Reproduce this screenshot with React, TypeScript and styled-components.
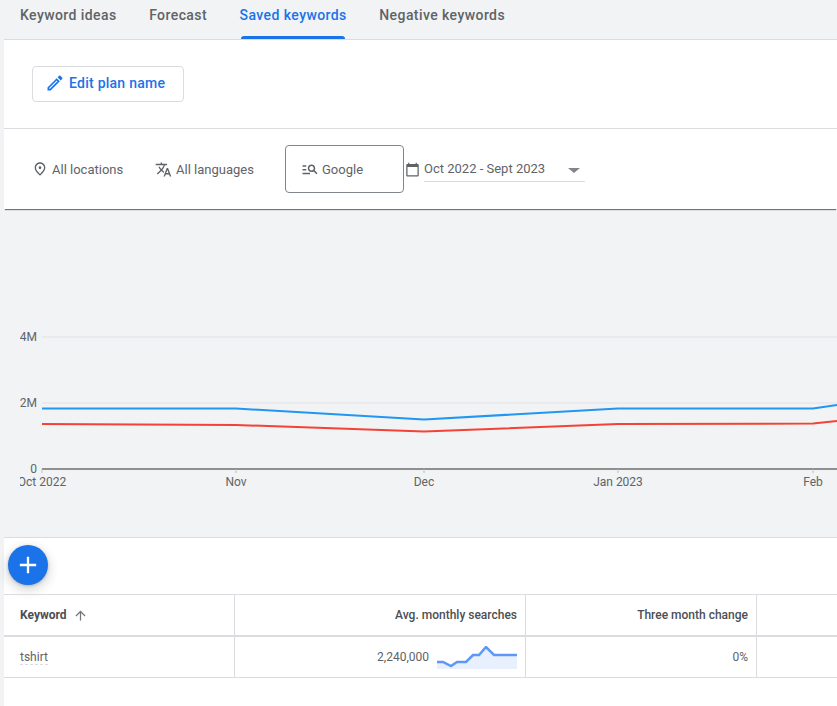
import React from 'react';
import styled, { createGlobalStyle } from 'styled-components';
import {
  MdAdd,
  MdArrowUpward,
  MdOutlineEdit,
  MdManageSearch,
  MdOutlinePlace,
  MdTranslate,
  MdCalendarToday,
} from 'react-icons/md';

const GlobalStyle = createGlobalStyle`
  html, body {
    margin: 0;
    padding: 0;
    background: #f1f3f4;
    font-family: Roboto, "Liberation Sans", sans-serif;
    color: #3c4043;
  }
`;

const Page = styled.div`
  width: 837px;
  height: 706px;
  overflow: hidden;
`;

const TabBar = styled.nav`
  display: flex;
  gap: 32.5px;
  height: 39px;
  padding-left: 20px;
`;

const Tab = styled.div<{ $active?: boolean }>`
  position: relative;
  font-size: 14px;
  font-weight: 500;
  letter-spacing: 0.42px;
  line-height: 30px;
  color: ${(p) => (p.$active ? '#1a73e8' : '#5f6368')};
  &::after {
    content: '';
    display: ${(p) => (p.$active ? 'block' : 'none')};
    position: absolute;
    left: 1px;
    right: 2px;
    bottom: 0;
    height: 3px;
    border-radius: 3px 3px 0 0;
    background: #1a73e8;
  }
`;

const Content = styled.div`
  margin-left: 4px;
`;

const PlanPanel = styled.section`
  height: 89px;
  padding: 26px 28px 0;
  box-sizing: border-box;
  background: #fff;
  border-top: 1px solid #dadce0;
`;

const EditButton = styled.button`
  display: flex;
  align-items: center;
  gap: 4px;
  width: 152px;
  height: 36px;
  padding: 0 12px 2px;
  box-sizing: border-box;
  background: #fff;
  border: 1px solid #dadce0;
  border-radius: 4px;
  color: #1a73e8;
  font-family: inherit;
  font-size: 14px;
  font-weight: 500;
  letter-spacing: 0.25px;
  svg {
    flex: none;
  }
`;

const FilterBar = styled.section`
  position: relative;
  display: flex;
  align-items: center;
  height: 81px;
  padding-left: 28px;
  box-sizing: border-box;
  background: #fff;
  border-top: 1px solid #dadce0;
  box-shadow: 0 2px 1px -1px rgba(60, 64, 67, 0.7);
`;

const FilterItem = styled.div<{ $width: number }>`
  display: flex;
  align-items: center;
  gap: 4px;
  width: ${(p) => p.$width}px;
  font-size: 13px;
  color: #5f6368;
  svg {
    flex: none;
  }
`;

const NetworkBox = styled.div`
  display: flex;
  align-items: center;
  gap: 3px;
  width: 119px;
  height: 48px;
  padding-left: 15px;
  box-sizing: border-box;
  border: 1px solid #80868b;
  border-radius: 4px;
  font-size: 13px;
  color: #5f6368;
`;

const DateWrap = styled.div`
  display: flex;
  align-items: center;
  gap: 4px;
  margin-left: 1px;
  color: #5f6368;
`;

const DateField = styled.div`
  position: relative;
  width: 161px;
  height: 26px;
  margin-top: -1px;
  font-size: 13px;
  line-height: 28px;
  color: #5f6368;
  border-bottom: 1px solid #dadce0;
`;

const Caret = styled.span`
  position: absolute;
  right: 5px;
  top: 13px;
  border-left: 6px solid transparent;
  border-right: 6px solid transparent;
  border-top: 5px solid #80868b;
`;

const ChartArea = styled.section`
  height: 329px;
  padding-left: 16px;
  border-bottom: 1px solid #dadce0;
  box-sizing: border-box;
  svg {
    display: block;
  }
  text {
    font-family: Roboto, "Liberation Sans", sans-serif;
    font-size: 12px;
    fill: #5f6368;
  }
`;

const TableArea = styled.section`
  background: #fff;
  height: 168px;
`;

const ActionRow = styled.div`
  height: 56px;
  padding: 7px 4px 0;
  box-sizing: border-box;
`;

const Fab = styled.button`
  display: flex;
  align-items: center;
  justify-content: center;
  width: 40px;
  height: 40px;
  padding: 0;
  border: 0;
  border-radius: 50%;
  background: #1a73e8;
  color: #fff;
  box-shadow: 0 1px 3px rgba(60, 64, 67, 0.3), 0 4px 8px 3px rgba(60, 64, 67, 0.15);
`;

const Row = styled.div<{ $head?: boolean }>`
  display: grid;
  grid-template-columns: 231px 291px 231px 1fr;
  height: ${(p) => (p.$head ? 43 : 41)}px;
  box-sizing: border-box;
  border-top: ${(p) => (p.$head ? '1px solid #dadce0' : 'none')};
  border-bottom: ${(p) => (p.$head ? '2px solid #dadce0' : '1px solid #dadce0')};
`;

const Cell = styled.div<{ $right?: boolean; $head?: boolean; $strong?: boolean }>`
  display: flex;
  align-items: center;
  justify-content: ${(p) => (p.$right ? 'flex-end' : 'flex-start')};
  padding: 0 8px 0 ${(p) => (p.$right ? 8 : 16)}px;
  border-right: 1px solid #dadce0;
  box-sizing: border-box;
  font-size: 12px;
  font-weight: ${(p) => (p.$strong ? 700 : p.$head ? 500 : 400)};
  color: ${(p) => (p.$head ? '#4b4f53' : '#5f6368')};
  &:last-child {
    border-right: 0;
  }
`;

const SortIcon = styled.span`
  display: flex;
  margin-left: 6px;
  color: #757575;
`;

const KeywordText = styled.span`
  border-bottom: 1px dashed #dadce0;
  line-height: 14px;
`;

const Searches = styled.span`
  margin-right: 8px;
`;

const SparkSvg = styled.svg`
  margin-top: 2px;
`;

const blue = 'M42 408.5 L236 408.5 L424 419.5 L618 408.5 L813 408.5 L837 405';
const red = 'M42 424 L236 425 L424 431.5 L618 424 L813 423.5 L837 421';

const xLabels = [
  { x: 42, label: 'Oct 2022' },
  { x: 236, label: 'Nov' },
  { x: 424, label: 'Dec' },
  { x: 618, label: 'Jan 2023' },
  { x: 813, label: 'Feb' },
];

const yLabels = [
  { y: 337, label: '4M' },
  { y: 403, label: '2M' },
];

function TrendChart() {
  return (
    <svg width={817} height={328} viewBox="20 209 817 328">
      {yLabels.map((t) => (
        <g key={t.label}>
          <line x1={42} x2={837} y1={t.y} y2={t.y} stroke="#e8eaed" strokeWidth={2} />
          <text x={37} y={t.y + 4} textAnchor="end">{t.label}</text>
        </g>
      ))}
      <text x={37} y={473} textAnchor="end">0</text>
      <path d={blue} fill="none" stroke="#2196f3" strokeWidth={2} />
      <path d={red} fill="none" stroke="#f44336" strokeWidth={2} />
      <line x1={42} x2={837} y1={469} y2={469} stroke="#8f8f8f" strokeWidth={2} />
      {xLabels.map((t) => (
        <g key={t.label}>
          <line x1={t.x} x2={t.x} y1={469} y2={473} stroke="#bdbdbd" strokeWidth={1} />
          <text x={t.x} y={486} textAnchor="middle">{t.label}</text>
        </g>
      ))}
    </svg>
  );
}

function Sparkline() {
  const line = 'M0 16 L6 16 L14 20 L20 16 L29 16 L36 9 L42 9 L49 1 L57 9 L80 9';
  return (
    <SparkSvg width={80} height={24} viewBox="0 0 80 24">
      <path d={`${line} L80 23 L0 23 Z`} fill="#e8f0fe" />
      <path d={line} fill="none" stroke="#5e97f6" strokeWidth={2.5} />
    </SparkSvg>
  );
}

export default function App() {
  return (
    <Page>
      <GlobalStyle />
      <TabBar>
        <Tab>Keyword ideas</Tab>
        <Tab>Forecast</Tab>
        <Tab $active>Saved keywords</Tab>
        <Tab>Negative keywords</Tab>
      </TabBar>
      <Content>
        <PlanPanel>
          <EditButton>
            <MdOutlineEdit size={20} />
            Edit plan name
          </EditButton>
        </PlanPanel>
        <FilterBar>
          <FilterItem $width={123}>
            <MdOutlinePlace size={16} />
            All locations
          </FilterItem>
          <FilterItem $width={130}>
            <MdTranslate size={17} />
            All languages
          </FilterItem>
          <NetworkBox>
            <MdManageSearch size={18} />
            Google
          </NetworkBox>
          <DateWrap>
            <MdCalendarToday size={15} />
            <DateField>
              Oct 2022 - Sept 2023
              <Caret />
            </DateField>
          </DateWrap>
        </FilterBar>
        <ChartArea>
          <TrendChart />
        </ChartArea>
        <TableArea>
          <ActionRow>
            <Fab aria-label="Add keyword">
              <MdAdd size={28} />
            </Fab>
          </ActionRow>
          <Row $head>
            <Cell $head $strong>
              Keyword
              <SortIcon><MdArrowUpward size={15} /></SortIcon>
            </Cell>
            <Cell $head $right>Avg. monthly searches</Cell>
            <Cell $head $right>Three month change</Cell>
            <Cell $head />
          </Row>
          <Row>
            <Cell><KeywordText>tshirt</KeywordText></Cell>
            <Cell $right>
              <Searches>2,240,000</Searches>
              <Sparkline />
            </Cell>
            <Cell $right>0%</Cell>
            <Cell />
          </Row>
        </TableArea>
      </Content>
    </Page>
  );
}
